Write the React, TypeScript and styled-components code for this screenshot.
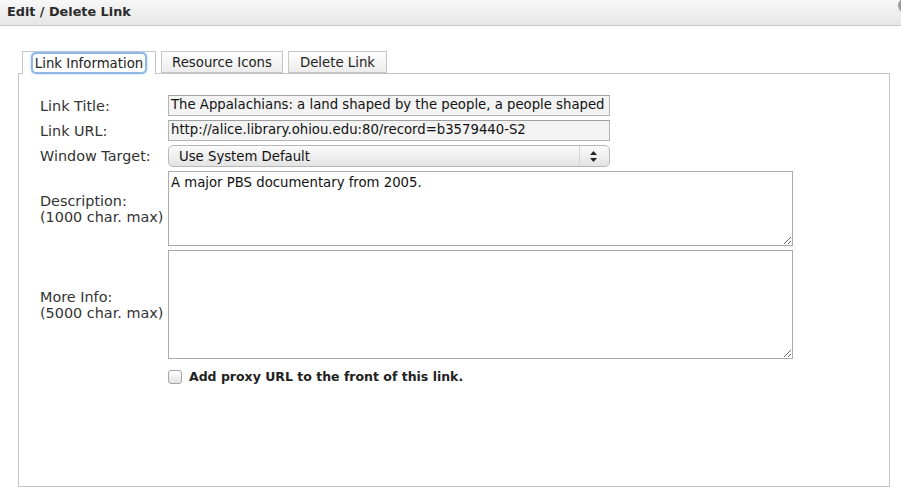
import styled, { createGlobalStyle } from "styled-components";

const GlobalStyle = createGlobalStyle`
  html, body {
    margin: 0;
    padding: 0;
    background: #ffffff;
  }
  body {
    font-family: "DejaVu Sans", Verdana, sans-serif;
    color: #333;
  }
`;

// 대화상자 전체
const Dialog = styled.div`
  width: 901px;
  height: 501px;
  background: #fff;
  overflow: hidden;
  position: relative;
`;

const TitleBar = styled.div`
  height: 26px;
  box-sizing: border-box;
  padding: 4px 0 0 7px;
  background: linear-gradient(#f7f7f7, #e6e6e6);
  border-bottom: 1px solid #c9c9c9;
  font-size: 12.8px;
  font-weight: bold;
  color: #2b2b2b;
`;

const CloseButton = styled.div`
  position: absolute;
  top: -2px;
  right: -12px;
  width: 15px;
  height: 15px;
  border-radius: 50%;
  background: #9a9a9a;
`;

const Body = styled.div`
  padding: 25px 11px 0 18px;
`;

const TabList = styled.div`
  display: flex;
  gap: 5px;
  padding-left: 4px;
  height: 22px;
  position: relative;
  z-index: 1;
`;

const Tab = styled.div<{ $active?: boolean; $width: number }>`
  box-sizing: border-box;
  width: ${(p) => p.$width}px;
  height: ${(p) => (p.$active ? "23px" : "22px")};
  padding-top: ${(p) => (p.$active ? "2px" : "3px")};
  text-align: center;
  border: 1px solid #c6c6c6;
  border-bottom: ${(p) => (p.$active ? "none" : "1px solid #c6c6c6")};
  background: ${(p) => (p.$active ? "#fff" : "linear-gradient(#ffffff, #ececec)")};
  font-size: 13.3px;
  color: #222;
  white-space: nowrap;
`;

const FocusLabel = styled.span`
  display: inline-block;
  padding: 1px 2px 0;
  border-radius: 3px;
  box-shadow: 0 0 0 2px #8fb6e6, 0 0 3px 2px #b4d0f2;
  line-height: 17px;
`;

const Panel = styled.div`
  box-sizing: border-box;
  height: 414px;
  border: 1px solid #c6c6c6;
  padding: 21px 0 0 21px;
`;

const Form = styled.div`
  display: grid;
  grid-template-columns: 128px auto;
  row-gap: 4px;
  align-items: center;
  color: #333;
`;

const Label = styled.div`
  font-size: 14.4px;
  line-height: 16px;
`;

const TextInput = styled.div`
  box-sizing: border-box;
  width: 442px;
  height: 21px;
  border: 1px solid #b3b3b3;
  border-top-color: #9f9f9f;
  background: #f3f3f3;
  padding: 1px 0 0 2px;
  font-size: 13.25px;
  color: #111;
  white-space: nowrap;
  overflow: hidden;
`;

const SelectBox = styled.div`
  box-sizing: border-box;
  width: 442px;
  height: 22px;
  border: 1px solid #b8b8b8;
  border-radius: 5px;
  background: linear-gradient(#fbfbfb, #e3e3e3);
  display: flex;
  align-items: center;
  font-size: 13.25px;
  color: #111;
`;

const SelectText = styled.div`
  flex: 1;
  padding-left: 10px;
`;

const SelectArrows = styled.div`
  width: 26px;
  height: 100%;
  border-left: 1px solid #d6d6d6;
  display: flex;
  align-items: center;
  justify-content: center;
  padding-right: 3px;
`;

const TextArea = styled.textarea<{ $height: number }>`
  box-sizing: border-box;
  width: 625px;
  height: ${(p) => p.$height}px;
  border: 1px solid #ababab;
  padding: 3px 2px;
  margin: 0;
  font-family: "DejaVu Sans", Verdana, sans-serif;
  font-size: 13.25px;
  color: #111;
  background: #fff;
  display: block;
`;

const CheckRow = styled.label`
  display: flex;
  align-items: center;
  gap: 7px;
  margin-top: 6px;
  font-weight: bold;
  font-size: 12.5px;
  color: #222;
`;

const CheckBox = styled.span`
  box-sizing: border-box;
  width: 14px;
  height: 14px;
  border: 1px solid #a5a5a5;
  border-radius: 3px;
  background: linear-gradient(#ffffff, #e2e2e2);
`;

function App() {
  return (
    <Dialog>
      <GlobalStyle />
      <TitleBar>Edit / Delete Link</TitleBar>
      <CloseButton />
      <Body>
        <TabList>
          <Tab $active $width={134}>
            <FocusLabel>Link Information</FocusLabel>
          </Tab>
          <Tab $width={122}>Resource Icons</Tab>
          <Tab $width={99}>Delete Link</Tab>
        </TabList>
        <Panel>
          <Form>
            <Label>Link Title:</Label>
            <TextInput>The Appalachians: a land shaped by the people, a people shaped</TextInput>

            <Label>Link URL:</Label>
            <TextInput>http://alice.library.ohiou.edu:80/record=b3579440-S2</TextInput>

            <Label>Window Target:</Label>
            <SelectBox>
              <SelectText>Use System Default</SelectText>
              <SelectArrows>
                <svg width="7" height="11" viewBox="0 0 7 11">
                  <path d="M3.5 0 L7 4 H0 Z" fill="#222" />
                  <path d="M3.5 11 L7 7 H0 Z" fill="#222" />
                </svg>
              </SelectArrows>
            </SelectBox>

            <Label>
              Description:
              <br />
              (1000 char. max)
            </Label>
            <TextArea $height={75} defaultValue="A major PBS documentary from 2005." />

            <Label>
              More Info:
              <br />
              (5000 char. max)
            </Label>
            <TextArea $height={109} defaultValue="" />

            <div />
            <CheckRow>
              <CheckBox />
              Add proxy URL to the front of this link.
            </CheckRow>
          </Form>
        </Panel>
      </Body>
    </Dialog>
  );
}

export default App;
